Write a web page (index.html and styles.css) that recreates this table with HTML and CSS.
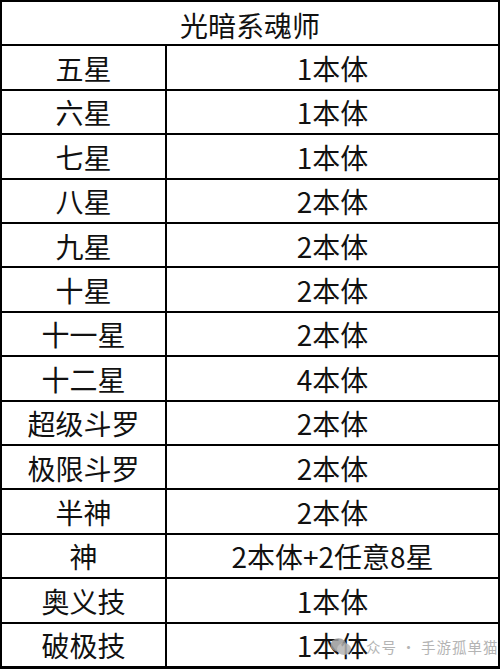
FILE: index.html
```html
<!DOCTYPE html>
<html lang="zh">
<head>
<meta charset="utf-8">
<link rel="stylesheet" href="styles.css">
</head>
<body>
<div class="sheet">
  <div class="cell head">光暗系魂师</div>
  <div class="cell">五星</div><div class="cell">1本体</div>
  <div class="cell">六星</div><div class="cell">1本体</div>
  <div class="cell">七星</div><div class="cell">1本体</div>
  <div class="cell">八星</div><div class="cell">2本体</div>
  <div class="cell">九星</div><div class="cell">2本体</div>
  <div class="cell">十星</div><div class="cell">2本体</div>
  <div class="cell">十一星</div><div class="cell">2本体</div>
  <div class="cell">十二星</div><div class="cell">4本体</div>
  <div class="cell">超级斗罗</div><div class="cell">2本体</div>
  <div class="cell">极限斗罗</div><div class="cell">2本体</div>
  <div class="cell">半神</div><div class="cell">2本体</div>
  <div class="cell">神</div><div class="cell">2本体+2任意8星</div>
  <div class="cell">奥义技</div><div class="cell">1本体</div>
  <div class="cell">破极技</div><div class="cell">1本体</div>
  <div class="mark">
    <svg class="mark-icon" width="22" height="20" viewBox="0 0 22 20">
      <ellipse cx="8.5" cy="8" rx="8" ry="6.8" fill="#9a9a9a"/>
      <ellipse cx="14" cy="12" rx="7" ry="6" fill="#b4b4b4"/>
    </svg>
    <span class="mark-text">众号 · 手游孤单猫</span>
  </div>
</div>
</body>
</html>
```
FILE: styles.css
```css
html, body {
  margin: 0;
  padding: 0;
  background: #fff;
}
.sheet {
  position: relative;
  width: 500px;
  height: 669px;
  box-sizing: border-box;
  padding: 2px 2px 3px 2px;
  background: #000;
  display: grid;
  grid-template-columns: 163px 1fr;
  grid-template-rows: repeat(15, 1fr);
  gap: 2px;
  font-family: "Noto Sans CJK SC", "Noto Sans", sans-serif;
  font-size: 28px;
  color: #111;
}
.cell {
  background: #fff;
  display: flex;
  align-items: center;
  justify-content: center;
  line-height: 1;
  padding-top: 1px;
}
.head {
  grid-column: 1 / 3;
  padding-top: 3px;
}
.mark {
  position: absolute;
  left: 330px;
  top: 637px;
  display: flex;
  align-items: center;
  gap: 14px;
  opacity: 0.85;
}
.mark-icon {
  display: block;
}
.mark-text {
  font-size: 14.5px;
  color: #a8a8a8;
  letter-spacing: 1px;
  line-height: 20px;
}
```
